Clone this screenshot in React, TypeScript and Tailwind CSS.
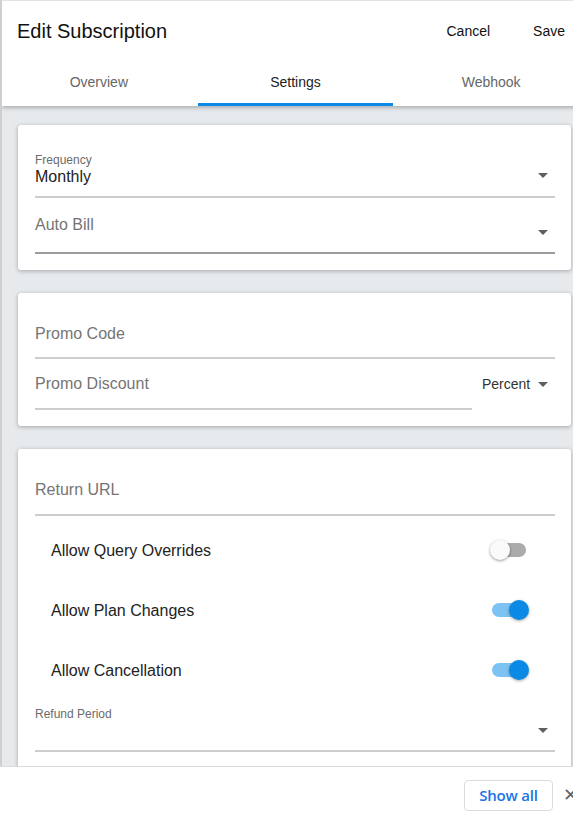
import React from "react";

const Arrow = () => (
  <svg width="10" height="5" viewBox="0 0 10 5" className="block">
    <path d="M0 0 L10 0 L5 5 Z" fill="#5f5f5f" />
  </svg>
);

const Toggle = ({ on }: { on: boolean }) => (
  <div className={`relative w-[34px] h-[14px] rounded-full ${on ? "bg-[#7cc2f2]" : "bg-[#ababab]"}`}>
    {on ? (
      <div className="absolute -top-[3px] -right-[3px] w-[20px] h-[20px] rounded-full bg-[#0a8ae5] shadow-[0_1px_3px_rgba(0,0,0,0.35)]" />
    ) : (
      <div className="absolute -top-[3px] -left-[2px] w-[20px] h-[20px] rounded-full bg-[#fafafa] shadow-[0_1px_3px_rgba(0,0,0,0.4)]" />
    )}
  </div>
);

const ToggleRow = ({ label, on }: { label: string; on: boolean }) => (
  <div className="h-[60px] flex items-center justify-between pl-4 pr-[29px]">
    <span className="text-[16px] leading-[20px] pt-[2px] text-[#222]">{label}</span>
    <Toggle on={on} />
  </div>
);

export default function App() {
  return (
    <div
      className="h-[820px] w-[573px] flex flex-col overflow-hidden bg-white"
      style={{ fontFamily: '"Liberation Sans", Arial, sans-serif' }}
    >
      <div className="h-[766px] overflow-hidden border-l-2 border-t border-l-[#cfcfcf] border-t-[#e3e3e3] bg-[#e7eaed]">
        <div className="w-[587px]">
          {/* Header */}
          <div className="relative z-10 bg-white shadow-[0_2px_4px_rgba(0,0,0,0.25)]">
            <div className="h-[59px] flex items-center justify-between pl-[15px] pr-[24px] pt-[1px]">
              <span className="text-[20px] text-[#111]">Edit Subscription</span>
              <div className="flex items-center gap-[43px] text-[14px] text-[#111]">
                <span>Cancel</span>
                <span>Save</span>
              </div>
            </div>
            <div className="h-[46px] grid grid-cols-3 text-[14px]">
              <div className="flex items-center justify-center pb-[2px] pr-[2px] text-[#666]">Overview</div>
              <div className="relative flex items-center justify-center pb-[2px] text-[#222]">
                Settings
                <div className="absolute left-0 right-0 bottom-0 h-[3px] bg-[#0d8ae6]" />
              </div>
              <div className="flex items-center justify-center pb-[2px] text-[#666]">Webhook</div>
            </div>
          </div>

          {/* Content */}
          <div className="pt-[19px] pl-4 pr-[18px] flex flex-col gap-[23px]">
            {/* Card 1 */}
            <div className="bg-white rounded-[3px] shadow-[0_1px_4px_rgba(0,0,0,0.3)] pl-[17px] pr-4 pt-[28px] pb-4">
              <div className="relative pb-[9px] border-b-2 border-[#cdcdcd]">
                <div className="text-[12px] leading-[14px] text-[#6b6b6b]">Frequency</div>
                <div className="text-[16px] leading-[20px] text-[#222]">Monthly</div>
                <div className="absolute right-[7px] bottom-[18px]">
                  <Arrow />
                </div>
              </div>
              <div className="relative pt-[17px] pb-[17px] border-b-2 border-[#9b9b9b]">
                <div className="text-[16px] leading-[20px] text-[#757575]">Auto Bill</div>
                <div className="absolute right-[7px] bottom-[17px]">
                  <Arrow />
                </div>
              </div>
            </div>

            {/* Card 2 */}
            <div className="bg-white rounded-[3px] shadow-[0_1px_4px_rgba(0,0,0,0.3)] pl-[17px] pr-4 pt-[31px] pb-4">
              <div className="pb-[13px] border-b-2 border-[#cdcdcd]">
                <div className="text-[16px] leading-[20px] text-[#757575]">Promo Code</div>
              </div>
              <div className="flex items-end">
                <div className="flex-1 pt-[15px] pb-[14px] border-b-2 border-[#cdcdcd]">
                  <div className="text-[16px] leading-[20px] text-[#757575]">Promo Discount</div>
                </div>
                <div className="w-[83px] flex items-center justify-between pl-[10px] pr-[7px] self-stretch pt-[14px] pb-[15px]">
                  <span className="text-[14px] leading-[20px] text-[#333]">Percent</span>
                  <Arrow />
                </div>
              </div>
            </div>

            {/* Card 3 */}
            <div className="bg-white rounded-[3px] shadow-[0_1px_4px_rgba(0,0,0,0.3)] pl-[17px] pr-4 pt-[31px] pb-4">
              <div className="pb-[14px] border-b-2 border-[#cdcdcd]">
                <div className="text-[16px] leading-[20px] text-[#757575]">Return URL</div>
              </div>
              <div className="pt-[4px]">
                <ToggleRow label="Allow Query Overrides" on={false} />
                <ToggleRow label="Allow Plan Changes" on={true} />
                <ToggleRow label="Allow Cancellation" on={true} />
              </div>
              <div className="relative pt-[7px] pb-[29px] border-b-2 border-[#cdcdcd]">
                <div className="text-[12px] leading-[14px] text-[#6b6b6b]">Refund Period</div>
                <div className="absolute right-[7px] bottom-[17px]">
                  <Arrow />
                </div>
              </div>
              <div className="h-[40px]" />
            </div>
          </div>
        </div>
      </div>

      {/* Bottom bar */}
      <div className="h-[54px] border-t border-[#dcdcdc] bg-white flex items-start pt-[13px] pl-[464px]">
        <div
          className="shrink-0 h-[31px] w-[89px] rounded-[4px] border border-[#dadce0] flex items-center justify-center text-[15px] font-semibold text-[#1a73e8] tracking-[-0.2px]"
          style={{ fontFamily: '"Open Sans", "DejaVu Sans", sans-serif' }}
        >
          Show all
        </div>
        <div className="shrink-0 w-[20px] ml-[10px] mt-[6px] text-[#5f6368] text-[18px] leading-none whitespace-nowrap">
          ✕
        </div>
      </div>
    </div>
  );
}
